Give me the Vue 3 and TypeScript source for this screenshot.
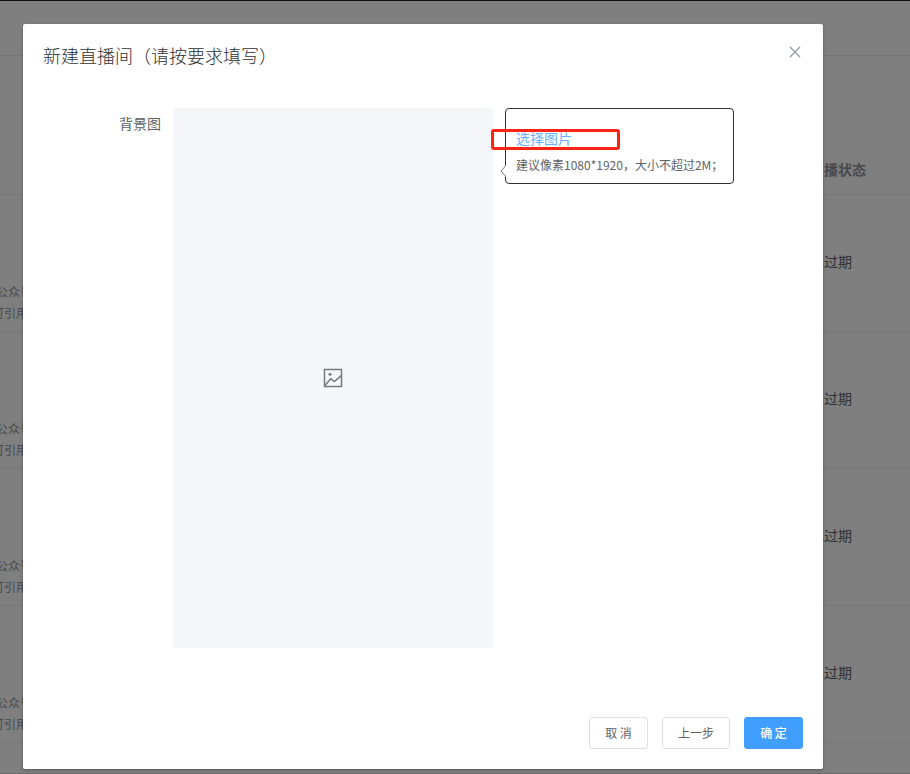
<script setup lang="ts">
import { ref } from 'vue'

interface RoomRow {
  id: number
  owner: string
  usage: string
  status: string
}

const rows: RoomRow[] = [1, 2, 3, 4].map((id) => ({
  id,
  owner: '公众号',
  usage: '可引用',
  status: '已过期',
}))

const visible = ref<boolean>(true)

function close(): void {
  visible.value = false
}
</script>

<template>
  <div class="page">
    <div class="topbar"></div>
    <main class="list">
      <table class="rooms">
        <colgroup>
          <col />
          <col class="status-col" />
        </colgroup>
        <thead>
          <tr>
            <th></th>
            <th scope="col">直播状态</th>
          </tr>
        </thead>
        <tbody>
          <tr v-for="row in rows" :key="row.id">
            <td class="info">
              <div class="owner">{{ row.owner }}</div>
              <div class="usage">{{ row.usage }}</div>
            </td>
            <td>{{ row.status }}</td>
          </tr>
        </tbody>
      </table>
    </main>

    <div v-if="visible" class="overlay">
      <section class="dialog" role="dialog" aria-modal="true" aria-labelledby="dialog-title">
        <header class="dialog-header">
          <h1 id="dialog-title">新建直播间（请按要求填写）</h1>
          <button type="button" class="close" aria-label="关闭" @click="close">
            <svg viewBox="0 0 12 12" width="12" height="12" aria-hidden="true">
              <path d="M1 1L11 11M11 1L1 11" fill="none" stroke="#909399" stroke-width="1.1" />
            </svg>
          </button>
        </header>

        <div class="field">
          <span class="label">背景图</span>
          <div class="preview">
            <svg viewBox="0 0 20 20" width="20" height="20" fill="none" stroke="#77797e" aria-hidden="true">
              <rect x="1.5" y="1.5" width="17" height="17" stroke-width="1.5" />
              <path d="M2 17.5L7.3 11.3Q8 10.6 8.7 11.3L10.6 13.2Q11.3 13.8 12 13L18.3 7.6" stroke-width="1.6" />
              <circle cx="7" cy="6.3" r="1.5" fill="#77797e" stroke="none" />
            </svg>
          </div>
          <div class="tip">
            <button type="button" class="pick">选择图片</button>
            <p>建议像素1080*1920，大小不超过2M；</p>
            <svg class="arrow" viewBox="0 0 6 12" width="6" height="12" aria-hidden="true">
              <path d="M5 0H6V12H5Z" fill="#fff" />
              <path d="M5.5 0V1L1 6L5.5 11V12" fill="none" stroke="#77797c" />
            </svg>
            <span class="marker"></span>
          </div>
        </div>

        <footer class="dialog-footer">
          <button type="button" class="btn" @click="close">取 消</button>
          <button type="button" class="btn">上一步</button>
          <button type="button" class="btn primary">确 定</button>
        </footer>
      </section>
    </div>
  </div>
</template>

<style>
body {
  margin: 0;
  background: #fff;
}
</style>

<style scoped>
.page {
  position: relative;
  overflow: hidden;
  min-height: 100vh;
  box-sizing: border-box;
  font-family: "Noto Sans CJK SC", "Noto Sans", sans-serif;
  font-size: 14px;
  color: #606266;
}

.topbar {
  box-sizing: border-box;
  height: 56px;
  border-top: 1px solid #222;
  border-bottom: 1px solid #e6e6e6;
}

.list {
  padding: 91px 0 30px;
  border-bottom: 1px solid #d8d8d8;
}

.rooms {
  width: 100%;
  table-layout: fixed;
  border-spacing: 0;
}

.status-col {
  width: 100px;
}

.rooms th,
.rooms td {
  box-sizing: border-box;
  padding: 0 0 4px;
  border-bottom: 1px solid #ebeef5;
  text-align: left;
  white-space: nowrap;
}

.rooms th {
  height: 48px;
  color: #909399;
  font-weight: 700;
}

.rooms td {
  height: 137px;
}

.rooms .info {
  padding-bottom: 8px;
  vertical-align: bottom;
  font-size: 12px;
  line-height: 21px;
  color: #909399;
}

.owner {
  margin-left: -4px;
}

.usage {
  margin-left: -8px;
}

.overlay {
  position: absolute;
  inset: 0;
  background: rgba(0, 0, 0, 0.5);
}

.dialog {
  margin: 24px 87px 0 23px;
  padding: 20px;
  border-radius: 2px;
  background: #fff;
  box-shadow: 0 1px 3px rgba(0, 0, 0, 0.3);
}

.dialog-header {
  display: flex;
  justify-content: space-between;
  align-items: flex-start;
  margin-bottom: 42px;
}

.dialog-header h1 {
  margin: 0;
  font-size: 18px;
  font-weight: 300;
  line-height: 22px;
  color: #303133;
}

.close {
  display: flex;
  padding: 2px;
  border: 0;
  background: none;
  cursor: pointer;
}

.field {
  display: flex;
  align-items: flex-start;
}

.label {
  box-sizing: border-box;
  width: 130px;
  padding-right: 12px;
  line-height: 30px;
  text-align: right;
}

.preview {
  display: flex;
  align-items: center;
  justify-content: center;
  width: 320px;
  height: 540px;
  background: #f5f7fa;
}

.tip {
  position: relative;
  margin-left: 12px;
  padding: 20px 10px 6px;
  border: 1px solid #303133;
  border-radius: 4px;
  background: #fff;
}

.pick {
  display: block;
  padding: 0;
  border: 0;
  background: none;
  font-family: inherit;
  font-size: 14px;
  line-height: 18px;
  color: #66b1ff;
  cursor: pointer;
}

.tip p {
  margin: 6px 0 0;
  font-size: 12px;
  line-height: 24px;
  white-space: nowrap;
}

.arrow {
  position: absolute;
  left: -6px;
  bottom: 6px;
}

.marker {
  position: absolute;
  left: -15px;
  top: 20px;
  box-sizing: border-box;
  width: 129px;
  height: 21px;
  border: 3px solid #fb2314;
  border-radius: 3px;
  pointer-events: none;
}

.dialog-footer {
  display: flex;
  justify-content: flex-end;
  gap: 14px;
  margin-top: 69px;
}

.btn {
  box-sizing: border-box;
  min-width: 59px;
  height: 32px;
  padding: 0 15px;
  border: 1px solid #dcdfe6;
  border-radius: 3px;
  background: #fff;
  font-family: inherit;
  font-size: 12px;
  line-height: 30px;
  color: #606266;
  cursor: pointer;
}

.primary {
  border-color: #409eff;
  background: #409eff;
  font-weight: 500;
  color: #fff;
}
</style>
